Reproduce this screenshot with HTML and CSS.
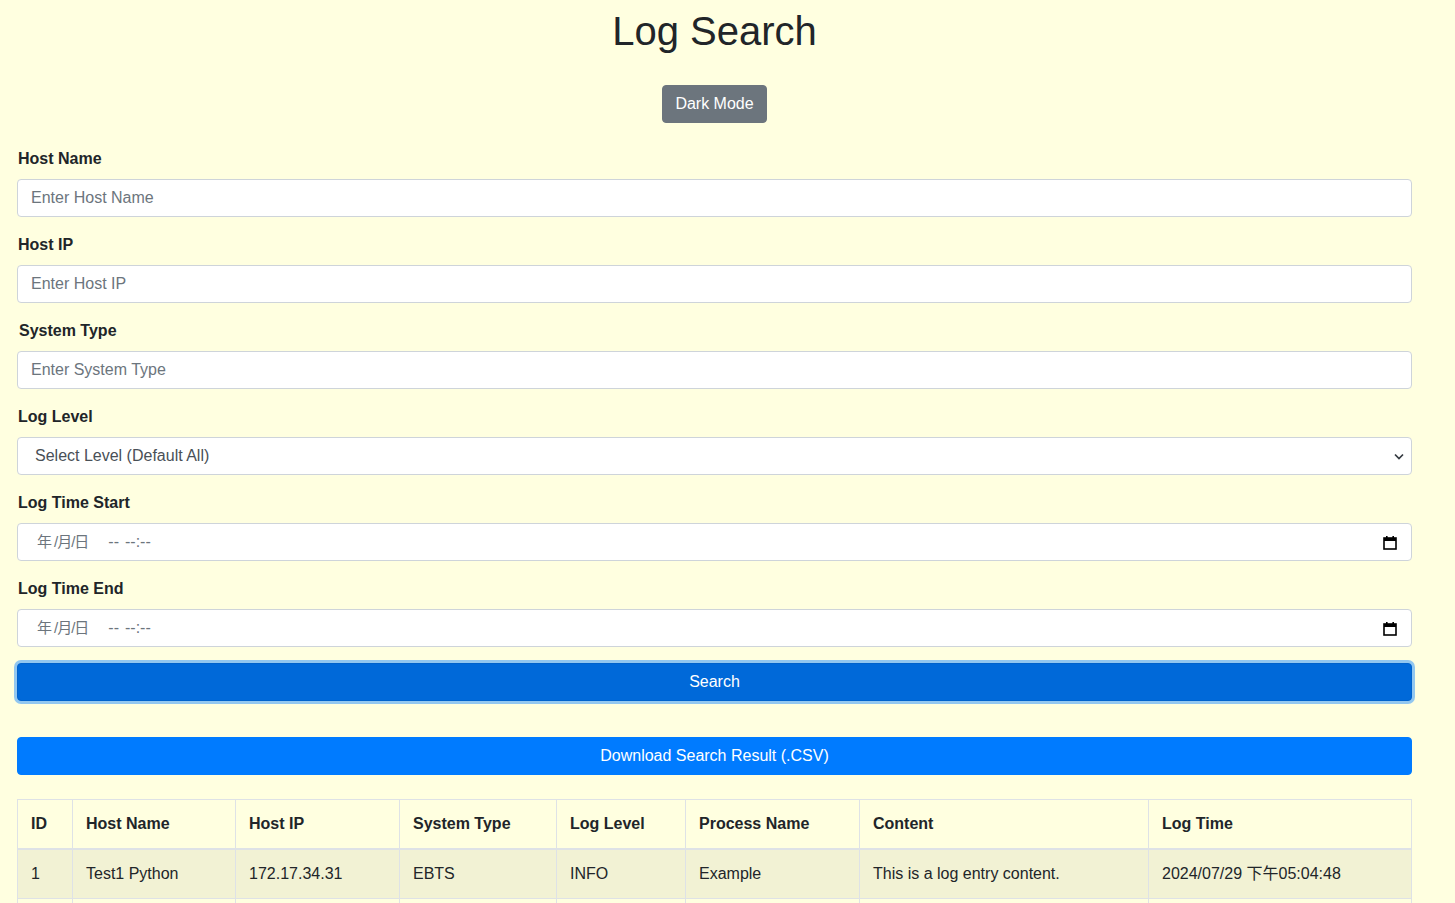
FILE: index.html
```html
<!DOCTYPE html>
<html lang="zh-Hant">
<head>
<meta charset="utf-8">
<title>Log Search</title>
<link rel="stylesheet" href="styles.css">
</head>
<body>
<div class="page">
  <h1 class="title">Log Search</h1>
  <div class="mode-row"><button class="btn btn-secondary">Dark Mode</button></div>

  <form class="search-form">
    <div class="form-group">
      <label class="form-label">Host Name</label>
      <input class="form-control" type="text" placeholder="Enter Host Name">
    </div>
    <div class="form-group">
      <label class="form-label">Host IP</label>
      <input class="form-control" type="text" placeholder="Enter Host IP">
    </div>
    <div class="form-group">
      <label class="form-label label-shift">System Type</label>
      <input class="form-control" type="text" placeholder="Enter System Type">
    </div>
    <div class="form-group">
      <label class="form-label">Log Level</label>
      <div class="select-box">
        <span class="select-text">Select Level (Default All)</span>
        <svg class="chevron" width="10" height="7" viewBox="0 0 10 7"><path d="M1 1.5l4 4 4-4" fill="none" stroke="#343a40" stroke-width="1.7"/></svg>
      </div>
    </div>
    <div class="form-group">
      <label class="form-label">Log Time Start</label>
      <div class="date-box">
        <span class="date-text"><span class="d-year">年</span><span class="d-cjk">/月/日</span><span class="d-dash">--</span><span class="d-time">--:--</span></span>
        <svg class="cal" width="14" height="15" viewBox="0 0 14 15"><rect x="1" y="3" width="12" height="11" fill="none" stroke="#000" stroke-width="1.6"/><rect x="1" y="3" width="12" height="3" fill="#000"/><rect x="3" y="1" width="1.6" height="3" fill="#000"/><rect x="9.4" y="1" width="1.6" height="3" fill="#000"/></svg>
      </div>
    </div>
    <div class="form-group">
      <label class="form-label">Log Time End</label>
      <div class="date-box">
        <span class="date-text"><span class="d-year">年</span><span class="d-cjk">/月/日</span><span class="d-dash">--</span><span class="d-time">--:--</span></span>
        <svg class="cal" width="14" height="15" viewBox="0 0 14 15"><rect x="1" y="3" width="12" height="11" fill="none" stroke="#000" stroke-width="1.6"/><rect x="1" y="3" width="12" height="3" fill="#000"/><rect x="3" y="1" width="1.6" height="3" fill="#000"/><rect x="9.4" y="1" width="1.6" height="3" fill="#000"/></svg>
      </div>
    </div>
    <button type="button" class="btn btn-primary btn-block btn-focus">Search</button>
  </form>

  <button class="btn btn-primary btn-block download">Download Search Result (.CSV)</button>

  <table class="log-table">
    <colgroup>
      <col class="c-id"><col class="c-host"><col class="c-ip"><col class="c-sys"><col class="c-level"><col class="c-proc"><col class="c-content"><col class="c-time">
    </colgroup>
    <thead>
      <tr><th>ID</th><th>Host Name</th><th>Host IP</th><th>System Type</th><th>Log Level</th><th>Process Name</th><th>Content</th><th>Log Time</th></tr>
    </thead>
    <tbody>
      <tr class="odd"><td>1</td><td>Test1 Python</td><td>172.17.34.31</td><td>EBTS</td><td>INFO</td><td>Example</td><td>This is a log entry content.</td><td>2024/07/29 下午05:04:48</td></tr>
      <tr><td>2</td><td>Test1 Python</td><td>172.17.34.31</td><td>EBTS</td><td>INFO</td><td>Example</td><td>This is a log entry content.</td><td>2024/07/29 下午05:04:48</td></tr>
    </tbody>
  </table>
</div>
</body>
</html>
```

FILE: styles.css
```css
html, body {
  margin: 0;
  padding: 0;
  background: #ffffe0;
}
body {
  font-family: "Liberation Sans", Arial, "Noto Sans CJK TC", sans-serif;
  font-size: 16px;
  line-height: 1.5;
  color: #212529;
}
.page {
  padding: 7px 43px 40px 17px;
}
.title {
  margin: 0 0 30px;
  font-size: 40px;
  font-weight: 400;
  line-height: 48px;
  text-align: center;
}
.mode-row {
  display: flex;
  justify-content: center;
  margin-bottom: 24px;
}
.btn {
  font-family: inherit;
  font-size: 16px;
  line-height: 24px;
  padding: 6px 12px;
  border: 1px solid transparent;
  border-radius: 4px;
  color: #fff;
  cursor: pointer;
}
.btn-secondary {
  background: #6c757d;
  border-color: #6c757d;
}
.btn-primary {
  background: #007bff;
  border-color: #007bff;
}
.btn-block {
  display: block;
  width: 100%;
}
.btn-focus {
  background: #0069d9;
  border-color: #0062cc;
  box-shadow: 0 0 0 3px rgba(38, 143, 255, 0.5);
}
.download {
  margin-top: 36px;
}
.form-group {
  margin-bottom: 16px;
}
.form-label {
  display: block;
  font-weight: 700;
  margin-bottom: 8px;
  padding-left: 1px;
}
.label-shift {
  padding-left: 2px;
}
.form-control, .select-box, .date-box {
  box-sizing: border-box;
  display: flex;
  align-items: center;
  width: 100%;
  height: 38px;
  padding: 6px 12px 6px 13px;
  font-family: inherit;
  font-size: 16px;
  line-height: 24px;
  color: #495057;
  background: #fff;
  border: 1px solid #ced4da;
  border-radius: 4px;
}
.form-control::placeholder {
  color: #6c757d;
  opacity: 1;
}
.select-box {
  justify-content: space-between;
  padding-left: 17px;
  padding-right: 7px;
}
.select-text {
  color: #495057;
}
.date-box {
  justify-content: space-between;
  padding-left: 19px;
  padding-right: 14px;
}
.date-text {
  display: flex;
  align-items: baseline;
  color: #6c757d;
  font-family: "Liberation Sans", "Noto Sans CJK TC", sans-serif;
  font-size: 16px;
}
.d-year {
  font-size: 15px;
  margin-right: 2px;
}
.d-cjk {
  font-size: 15px;
  letter-spacing: -1px;
}
.d-dash {
  margin-left: 20px;
}
.d-time {
  margin-left: 6px;
}
.log-table {
  width: 100%;
  margin-top: 24px;
  border-collapse: collapse;
  table-layout: fixed;
}
.c-id { width: 55px; }
.c-host { width: 163px; }
.c-ip { width: 164px; }
.c-sys { width: 157px; }
.c-level { width: 129px; }
.c-proc { width: 174px; }
.c-content { width: 289px; }
.c-time { width: 263px; }
.log-table th, .log-table td {
  padding: 12px 12px 12px 13px;
  border: 1px solid #dee2e6;
  text-align: left;
  vertical-align: top;
  line-height: 24px;
  white-space: nowrap;
}
.log-table th {
  font-weight: 700;
  border-bottom-width: 2px;
}
.log-table td {
  font-family: "Liberation Sans", "Noto Sans CJK TC", sans-serif;
}
.log-table .odd {
  background: rgba(0, 0, 0, 0.05);
}
```
